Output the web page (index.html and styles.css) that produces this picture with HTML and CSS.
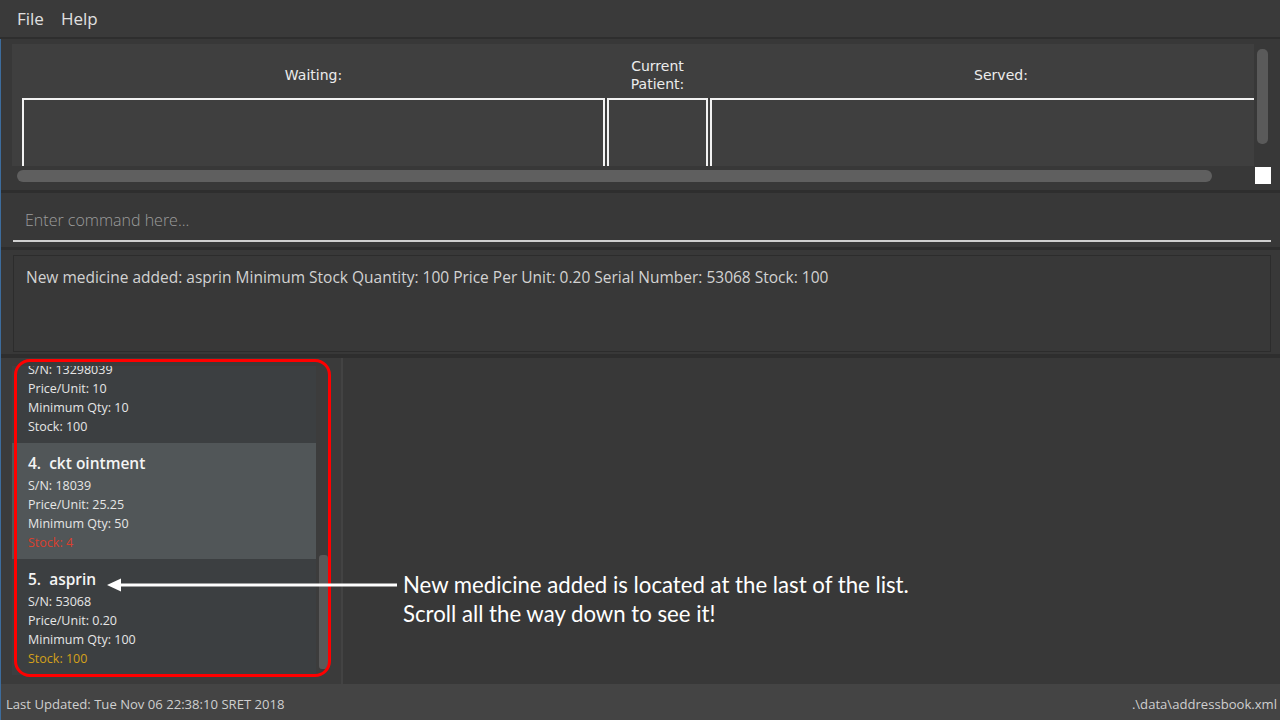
FILE: index.html
```html
<!DOCTYPE html>
<html>
<head>
<meta charset="utf-8">
<link rel="stylesheet" href="styles.css">
</head>
<body>
<div class="app">
  <div class="menubar">
    <span class="menu-item">File</span>
    <span class="menu-item">Help</span>
  </div>
  <div class="body-wrap">
    <section class="queue">
      <div class="queue-top">
        <div class="queue-view">
          <div class="queue-grid">
            <div class="q-label">Waiting:</div>
            <div class="q-label">Current<br>Patient:</div>
            <div class="q-label">Served:</div>
            <div class="q-box"></div>
            <div class="q-box"></div>
            <div class="q-box"></div>
          </div>
        </div>
        <div class="vscroll"><div class="vthumb"></div></div>
      </div>
      <div class="queue-bottom">
        <div class="hscroll"><div class="hthumb"></div></div>
        <div class="corner"></div>
      </div>
    </section>
    <div class="band band-3"></div>
    <section class="command">
      <div class="command-field">Enter command here...</div>
    </section>
    <div class="band band-3"></div>
    <section class="result">
      <div class="result-box">New medicine added: asprin Minimum Stock Quantity: 100 Price Per Unit: 0.20 Serial Number: 53068 Stock: 100</div>
    </section>
    <div class="band band-4"></div>
    <section class="main">
      <div class="list-panel">
        <div class="list-view">
          <div class="card">
            <div class="card-title">&nbsp;</div>
            <div class="card-line">S/N: 13298039</div>
            <div class="card-line">Price/Unit: 10</div>
            <div class="card-line">Minimum Qty: 10</div>
            <div class="card-line">Stock: 100</div>
          </div>
          <div class="card selected">
            <div class="card-title">4.&nbsp; ckt ointment</div>
            <div class="card-line">S/N: 18039</div>
            <div class="card-line">Price/Unit: 25.25</div>
            <div class="card-line">Minimum Qty: 50</div>
            <div class="card-line stock-low">Stock: 4</div>
          </div>
          <div class="card">
            <div class="card-title">5.&nbsp; asprin</div>
            <div class="card-line">S/N: 53068</div>
            <div class="card-line">Price/Unit: 0.20</div>
            <div class="card-line">Minimum Qty: 100</div>
            <div class="card-line stock-warn">Stock: 100</div>
          </div>
        </div>
        <div class="list-scroll"><div class="list-thumb"></div></div>
      </div>
      <div class="right-panel"></div>
    </section>
    <footer class="status">
      <span>Last Updated: Tue Nov 06 22:38:10 SRET 2018</span>
      <span>.\data\addressbook.xml</span>
    </footer>
  </div>
  <div class="highlight"></div>
  <svg class="arrow" width="290" height="16" viewBox="0 0 290 16">
    <line x1="10" y1="8" x2="290" y2="8" stroke="#ffffff" stroke-width="3"/>
    <polygon points="0,8 14,1.5 14,14.5" fill="#ffffff"/>
  </svg>
  <div class="note">New medicine added is located at the last of the list.<br>Scroll all the way down to see it!</div>
</div>
</body>
</html>
```
FILE: styles.css
```css
html, body {
  margin: 0;
  padding: 0;
}
body {
  width: 1280px;
  height: 720px;
  overflow: hidden;
  background: #383838;
  font-family: "Open Sans", "Noto Sans", sans-serif;
  color: #dcdcdc;
}
.app {
  position: relative;
  width: 1280px;
  height: 720px;
  display: flex;
  flex-direction: column;
}
.menubar {
  height: 37px;
  background: #3a3a3a;
  border-bottom: 2px solid #2e2e2e;
  display: flex;
  align-items: center;
  gap: 17px;
  padding-left: 17px;
  font-family: "Open Sans", sans-serif;
  font-size: 17px;
  color: #e0e0e0;
}
.body-wrap {
  flex: 1;
  display: flex;
  flex-direction: column;
  border-left: 1px solid #3d6c9c;
}
.queue {
  height: 151px;
  flex-shrink: 0;
  padding: 5px 0 0 11px;
  box-sizing: border-box;
  display: flex;
  flex-direction: column;
}
.queue-top {
  display: flex;
  height: 122px;
}
.queue-view {
  width: 1242px;
  background: #3f3f3f;
  overflow: hidden;
  padding-left: 10px;
  box-sizing: border-box;
}
.queue-grid {
  display: grid;
  grid-template-columns: 583px 101px 582px;
  grid-template-rows: 54px 80px;
  column-gap: 2px;
}
.q-label {
  display: flex;
  align-items: center;
  justify-content: center;
  text-align: center;
  padding-top: 8px;
  font-family: "DejaVu Sans", sans-serif;
  font-size: 14px;
  line-height: 18px;
  color: #ececec;
}
.q-box {
  border: 2px solid #f2f2f2;
  border-bottom: none;
}
.vscroll {
  flex: 1;
  padding: 5px 0 0 3px;
}
.vthumb {
  width: 11px;
  height: 95px;
  border-radius: 5px;
  background: #5a5a5a;
}
.queue-bottom {
  flex: 1;
  display: flex;
  align-items: flex-start;
}
.hscroll {
  width: 1243px;
  box-sizing: border-box;
  padding: 4px 0 0 5px;
}
.hthumb {
  width: 1195px;
  height: 12px;
  border-radius: 6px;
  background: #5f5f5f;
}
.corner {
  width: 16px;
  height: 17px;
  margin-top: 1px;
  background: #ffffff;
}
.band {
  flex-shrink: 0;
  background: #2e2e2e;
}
.band-3 { height: 3px; }
.band-4 { height: 4px; }
.command {
  height: 54px;
  flex-shrink: 0;
  padding: 0 9px 0 12px;
  box-sizing: border-box;
}
.command-field {
  height: 49px;
  border-bottom: 2px solid #cfcfcf;
  padding-left: 12px;
  display: flex;
  align-items: center;
  padding-top: 7px;
  box-sizing: border-box;
  font-size: 16px;
  font-weight: 300;
  color: #9c9c9c;
}
.result {
  height: 104px;
  flex-shrink: 0;
  padding: 5px 9px 2px 12px;
  box-sizing: border-box;
}
.result-box {
  height: 97px;
  box-sizing: border-box;
  border: 1px solid #2c2c2c;
  padding: 10px 12px;
  font-size: 15.5px;
  line-height: 22px;
  color: #d2d2d2;
}
.main {
  height: 326px;
  flex-shrink: 0;
  display: flex;
}
.list-panel {
  width: 342px;
  box-sizing: border-box;
  padding: 8px 11px 9px 11px;
  display: flex;
  border-right: 2px solid #434343;
  background: #3b3b3b;
}
.list-view {
  width: 305px;
  display: flex;
  flex-direction: column;
  justify-content: flex-end;
  overflow: hidden;
  background: #3c3f41;
}
.card {
  flex-shrink: 0;
  height: 116px;
  box-sizing: border-box;
  padding: 10px 10px 7px 16px;
  background: #3c3f41;
}
.card.selected {
  background: #515658;
}
.card-title {
  font-family: "Open Sans", sans-serif;
  font-weight: 600;
  font-size: 15.5px;
  line-height: 20px;
  color: #f4f4f4;
  margin-bottom: 3px;
}
.card-line {
  font-size: 12.5px;
  line-height: 19px;
  color: #e6e6e6;
}
.stock-low { color: #d9402e; }
.stock-warn { color: #d4a11a; }
.list-scroll {
  width: 14px;
  display: flex;
  flex-direction: column;
  justify-content: flex-end;
  align-items: center;
  background: #3c3c3c;
  padding-bottom: 6px;
}
.list-thumb {
  width: 9px;
  height: 114px;
  border-radius: 3px;
  background: #5a5a5a;
}
.right-panel {
  flex: 1;
}
.status {
  flex: 1;
  background: #444444;
  display: flex;
  justify-content: space-between;
  align-items: center;
  padding: 3px 3px 0 5px;
  font-size: 13.1px;
  color: #cfcfcf;
}
.highlight {
  position: absolute;
  left: 14px;
  top: 359px;
  width: 317px;
  height: 318px;
  box-sizing: border-box;
  border: 3px solid #ff0000;
  border-radius: 16px;
  pointer-events: none;
}
.arrow {
  position: absolute;
  left: 107px;
  top: 577px;
}
.note {
  position: absolute;
  left: 403px;
  top: 570px;
  font-family: "Lato", sans-serif;
  font-size: 22.2px;
  line-height: 29px;
  color: #ffffff;
}
```
